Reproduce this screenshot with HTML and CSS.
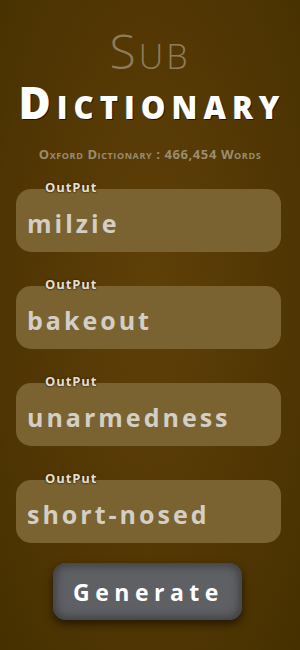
FILE: index.html
```html
<!DOCTYPE html>
<html lang="en">
<head>
  <meta charset="UTF-8">
  <meta name="viewport" content="width=device-width, initial-scale=1.0">
  <title>Sub Dictionary</title>
  <link rel="stylesheet" href="styles.css">
</head>
<body>
  <main class="app">
    <header class="title">
      <h1 class="title__sub">Sub</h1>
      <h2 class="title__main">Dictionary</h2>
      <p class="title__count">Oxford Dictionary : 466,454 Words</p>
    </header>

    <section class="outputs">
      <div class="output">
        <span class="output__label">OutPut</span>
        <p class="output__word">milzie</p>
      </div>
      <div class="output">
        <span class="output__label">OutPut</span>
        <p class="output__word">bakeout</p>
      </div>
      <div class="output">
        <span class="output__label">OutPut</span>
        <p class="output__word">unarmedness</p>
      </div>
      <div class="output">
        <span class="output__label">OutPut</span>
        <p class="output__word">short-nosed</p>
      </div>
    </section>

    <button class="generate">Generate</button>
  </main>
</body>
</html>
```

FILE: styles.css
```css
body {
  margin: 0;
  padding: 0;
  font-family: "Open Sans", Lato, sans-serif;
  background: radial-gradient(ellipse at 50% 45%, #5e4008 0%, #553905 45%, #463000 100%);
  min-height: 650px;
}

.app {
  display: flex;
  flex-direction: column;
  align-items: center;
  padding-top: 28px;
}

.title {
  text-align: center;
}

.title__sub {
  margin: 0;
  font-size: 48px;
  font-weight: 300;
  font-variant: small-caps;
  line-height: 46px;
  color: #8d7d5c;
  letter-spacing: 3px;
}

.title__main {
  margin: 6px 0 0 4px;
  font-size: 44px;
  font-weight: 800;
  font-variant: small-caps;
  line-height: 44px;
  color: #fff;
  letter-spacing: 6px;
  text-shadow: 1px 1px 0 #2a1600;
}

.title__count {
  margin: 21px 0 0;
  font-size: 13px;
  font-weight: 700;
  font-variant: small-caps;
  color: #9b8c6e;
  letter-spacing: 0.6px;
}

.outputs {
  display: flex;
  flex-direction: column;
  gap: 34px;
  margin-top: 26px;
  width: 265px;
  margin-left: -3px;
}

.output {
  position: relative;
  height: 63px;
  border-radius: 15px;
  background-color: #7a6331;
  display: flex;
  align-items: center;
  padding-left: 11px;
}

.output__label {
  position: absolute;
  top: -11px;
  left: 29px;
  font-size: 13px;
  font-weight: 700;
  color: #e4ded4;
  letter-spacing: 0.9px;
  text-shadow: 0 0 2px #3a2500, 0 0 2px #3a2500;
}

.output__word {
  margin: 4px 0 0;
  font-size: 25px;
  font-weight: 700;
  color: #d4cfc5;
  letter-spacing: 3px;
}

.generate {
  margin-top: 20px;
  margin-left: -5px;
  width: 189px;
  height: 57px;
  border: none;
  border-radius: 13px;
  background-color: #5f6064;
  color: #fff;
  font-family: "Open Sans", sans-serif;
  font-size: 23px;
  font-weight: 700;
  letter-spacing: 5.5px;
  padding-left: 8px;
  box-shadow: inset 0 0 8px 3px #3f3f42, 0 4px 8px rgba(0, 0, 0, 0.55);
  cursor: pointer;
}
```
